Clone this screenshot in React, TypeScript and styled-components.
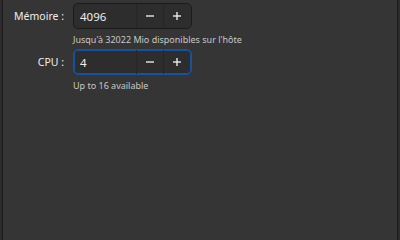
import React, { useState } from 'react';
import styled, { createGlobalStyle } from 'styled-components';

const GlobalStyle = createGlobalStyle`
  html, body {
    margin: 0;
    padding: 0;
    background: #2b2b2b;
  }
  body {
    font-family: "Noto Sans", "Open Sans", sans-serif;
  }
`;

const Frame = styled.div`
  min-height: 100vh;
  padding: 0 2px;
  box-sizing: border-box;
  display: flex;
`;

const Panel = styled.div`
  flex: 1;
  background: #353535;
  border-left: 1px solid #1b1b1b;
  border-right: 1px solid #1b1b1b;
  padding: 3px 0 0 0;
`;

const Form = styled.div`
  display: grid;
  grid-template-columns: 61px auto;
  column-gap: 9px;
  align-items: center;
  justify-content: start;
`;

const Label = styled.div`
  grid-column: 1;
  text-align: right;
  color: #eeeeec;
  font-size: 10.5px;
  white-space: nowrap;
`;

const Hint = styled.div<{ $last?: boolean }>`
  grid-column: 2;
  color: #c8c8c6;
  font-size: 9px;
  line-height: 12px;
  margin: 5px 0 ${p => (p.$last ? 0 : 3)}px;
  white-space: nowrap;
`;

const Spin = styled.div<{ $focused: boolean }>`
  grid-column: 2;
  display: flex;
  width: 119px;
  height: 26px;
  box-sizing: border-box;
  border-radius: 5px;
  background: #2d2d2d;
  border: 1px solid ${p => (p.$focused ? '#15539e' : '#1b1b1b')};
  box-shadow: ${p => (p.$focused ? 'inset 0 0 0 1px #15539e' : 'none')};
  overflow: hidden;
`;

const Value = styled.input`
  width: 62px;
  border: none;
  outline: none;
  background: transparent;
  color: #eeeeec;
  font-family: inherit;
  font-size: 11.5px;
  padding: 0 0 0 6px;
  box-sizing: border-box;
`;

const StepButton = styled.button<{ $wide?: boolean }>`
  width: ${p => (p.$wide ? 29 : 27)}px;
  border: none;
  border-left: 1px solid #262626;
  background: transparent;
  color: #eeeeec;
  padding: 0;
  display: flex;
  align-items: center;
  justify-content: center;
  cursor: pointer;
`;

const MinusIcon = () => (
  <svg width="10" height="10" viewBox="0 0 10 10">
    <rect x="1" y="4.3" width="8" height="1.4" fill="#e8e8e6" />
  </svg>
);

const PlusIcon = () => (
  <svg width="10" height="10" viewBox="0 0 10 10">
    <rect x="1" y="4.3" width="8" height="1.4" fill="#e8e8e6" />
    <rect x="4.3" y="1" width="1.4" height="8" fill="#e8e8e6" />
  </svg>
);

interface SpinFieldProps {
  value: number;
  max: number;
  focused?: boolean;
  onChange: (v: number) => void;
}

const SpinField: React.FC<SpinFieldProps> = ({ value, max, focused = false, onChange }) => (
  <Spin $focused={focused}>
    <Value value={value} onChange={e => onChange(Number(e.target.value) || 0)} />
    <StepButton onClick={() => onChange(Math.max(1, value - 1))}>
      <MinusIcon />
    </StepButton>
    <StepButton $wide onClick={() => onChange(Math.min(max, value + 1))}>
      <PlusIcon />
    </StepButton>
  </Spin>
);

export default function App() {
  const [memory, setMemory] = useState(4096);
  const [cpus, setCpus] = useState(4);

  return (
    <>
      <GlobalStyle />
      <Frame>
        <Panel>
          <Form>
            <Label>Mémoire :</Label>
            <SpinField value={memory} max={32022} onChange={setMemory} />
            <Hint>Jusqu'à 32022 Mio disponibles sur l'hôte</Hint>

            <Label>CPU :</Label>
            <SpinField value={cpus} max={16} focused onChange={setCpus} />
            <Hint $last>Up to 16 available</Hint>
          </Form>
        </Panel>
      </Frame>
    </>
  );
}
